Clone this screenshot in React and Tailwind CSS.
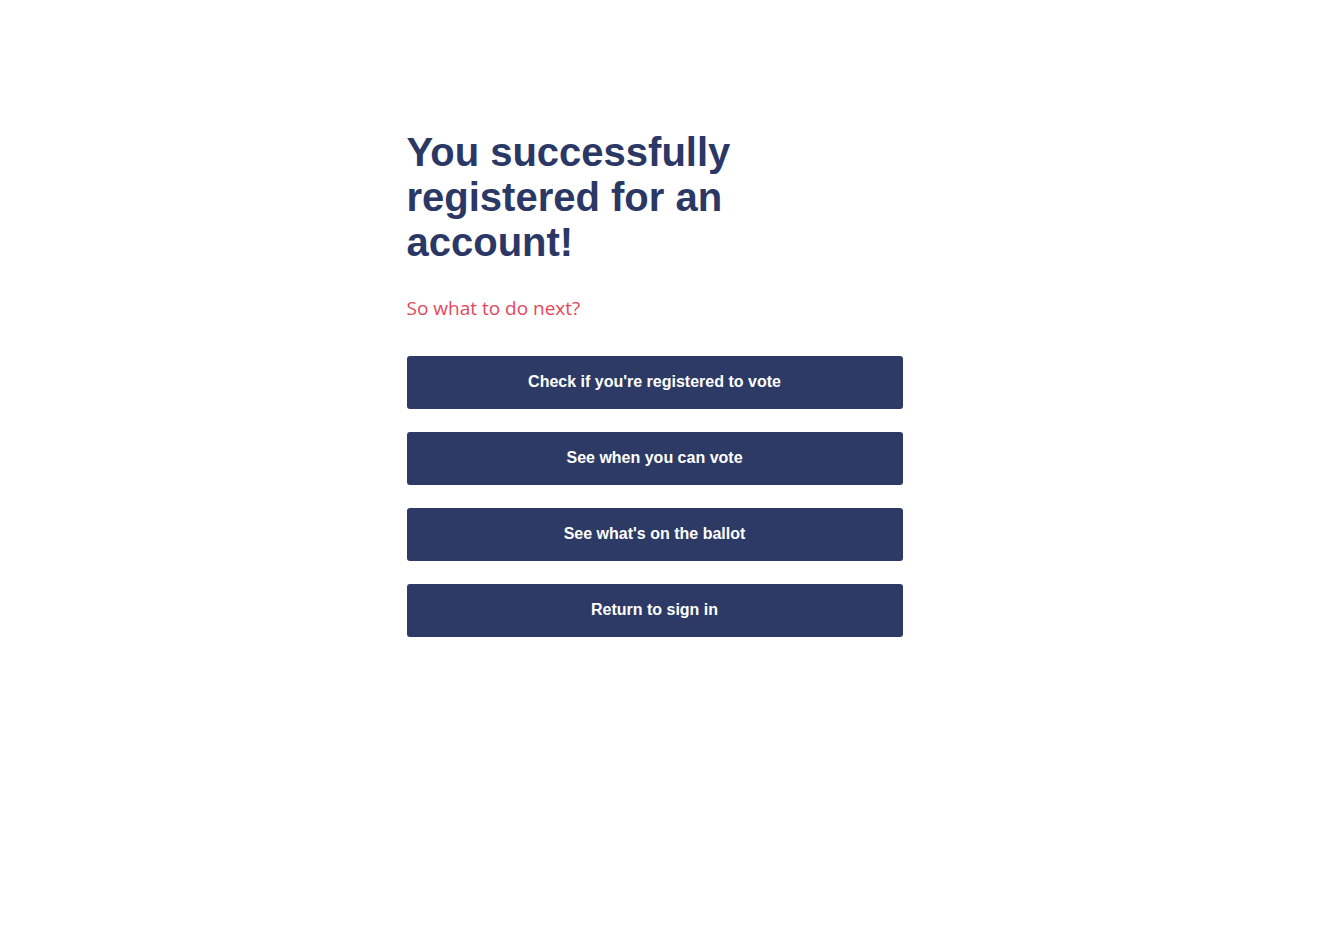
const actions = [
  "Check if you're registered to vote",
  "See when you can vote",
  "See what's on the ballot",
  "Return to sign in",
];

function App() {
  return (
    <div className="min-h-[952px] w-full bg-white">
      <div className="mx-auto w-[496px] pt-[130px] -translate-x-[12px]">
        {/* Heading */}
        <h1 className="w-[340px] font-['Liberation_Sans',Arial,sans-serif] text-[40px] font-bold leading-[45px] text-[#2b3866]">
          You successfully registered for an account!
        </h1>

        <p className="mt-[29px] font-['Open_Sans',sans-serif] text-[19px] leading-[28px] text-[#e4475c]">
          So what to do next?
        </p>

        {/* Actions */}
        <div className="mt-[34px] flex flex-col gap-[23px]">
          {actions.map((label) => (
            <button
              key={label}
              className="h-[53px] w-full rounded-[3px] bg-[#2d3a66] pb-[2px] font-['Liberation_Sans',Arial,sans-serif] text-[16px] font-bold text-white">
              {label}
            </button>
          ))}
        </div>
      </div>
    </div>
  );
}

export default App;
